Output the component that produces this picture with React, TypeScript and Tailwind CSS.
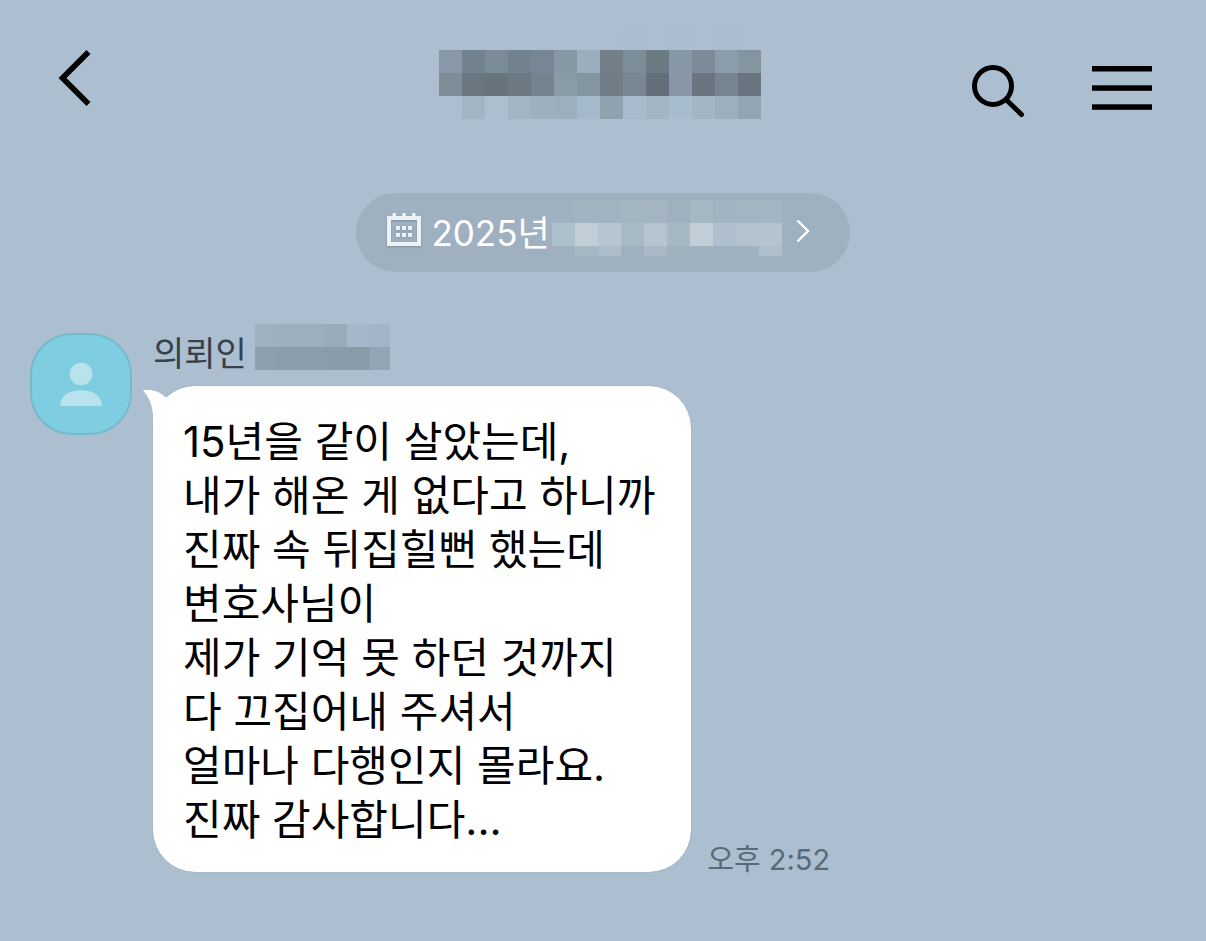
import React from 'react';

const MESSAGE_LINES = [
  '15년을 같이 살았는데,',
  '내가 해온 게 없다고 하니까',
  '진짜 속 뒤집힐뻔 했는데',
  '변호사님이',
  '제가 기억 못 하던 것까지',
  '다 끄집어내 주셔서',
  '얼마나 다행인지 몰라요.',
  '진짜 감사합니다...',
];

const CELL = 23;

// '' leaves the cell transparent
const TITLE_CELLS = [
  ['', '', '', '', '', '', '', '', '#a9bdce', '', '#a9bdce', '', '#a9bdce', ''],
  ['#8898a8', '#74828d', '#7b8c99', '#73818c', '#778594', '#8698a3', '#9baebe', '#727f89', '#7c8c98', '#6c7a84', '#8797a7', '#7d8b98', '#8a9dac', '#84959f'],
  ['#7e8c98', '#6a7780', '#68747b', '#6c7983', '#75838e', '#889ba7', '#83959f', '#707d87', '#798795', '#626f78', '#8797a7', '#6a7580', '#758491', '#6a7480'],
  ['', '#a2b5c4', '', '#a3b5c4', '#9db0bf', '#9bafbd', '#a4b9cc', '#8fa2b0', '#a7bbcd', '#a3b6c5', '#a8bccf', '#a2b6c6', '#9dafbf', '#93a4b5'],
];

const DATE_CELLS = [
  ['#9fb0c0', '#a2b3c1', '#a2b3c1', '#a4b5c2', '#a4b4c1', '#9eb1be', '#a6b7c4', '#a1b2c2', '#a3b4c3', '#a4b5c3'],
  ['#afc0cd', '#c1ced7', '#b7c5d0', '#a9bac7', '#b6c4cf', '#a6b8c4', '#c1ced8', '#b0bfcd', '#b4c2ce', '#b5c3cf'],
  ['', '#a6b7c4', '#adbcc9', '', '#a9bac6', '#a1b2bf', '#a0b1be', '', '#a0b1c0', '#aebecb'],
];

const NAME_CELLS = [
  ['#9fb1c1', '#9cafbf', '#9cafbf', '#98abba', '#a5b8cb', '#a3b6c8'],
  ['#8e9fad', '#8b9caa', '#8c9dab', '#8a9baa', '#8a9baa', '#94a6b5'],
];

interface MosaicProps {
  rows: string[][];
  width: number;
  height: number;
}

function Mosaic({ rows, width, height }: MosaicProps) {
  return (
    <svg
      width={width}
      height={height}
      viewBox={`0 0 ${width} ${height}`}
      shapeRendering="crispEdges"
      className="shrink-0"
      aria-hidden="true"
    >
      {rows.map((row, y) =>
        row.map((fill, x) =>
          fill ? (
            <rect key={`${x}-${y}`} x={x * CELL} y={y * CELL} width={CELL} height={CELL} fill={fill} />
          ) : null
        )
      )}
    </svg>
  );
}

function Header() {
  return (
    <header className="grid grid-cols-[1fr_auto_1fr] pt-[27px] pl-12 pr-[54px]">
      <button type="button" aria-label="뒤로" className="justify-self-start">
        <svg width="56" height="92" viewBox="0 0 56 92" fill="none" stroke="#000" strokeWidth="5.6">
          <path d="M40.5 25 L14.5 51 L40.5 77" />
        </svg>
      </button>

      <h1>
        <Mosaic rows={TITLE_CELLS} width={322} height={92} />
      </h1>

      <div className="flex justify-end gap-16">
        <button type="button" aria-label="검색">
          <svg width="56" height="92" viewBox="0 0 56 92" fill="none" stroke="#000" strokeWidth="5">
            <circle cx="21" cy="59" r="18.5" />
            <path d="M34.5 73 L49.5 87.5" strokeLinecap="round" />
          </svg>
        </button>
        <button type="button" aria-label="메뉴">
          <svg width="60" height="92" viewBox="0 0 60 92" fill="#000">
            <rect y="39" width="60" height="5.5" />
            <rect y="58.3" width="60" height="5.5" />
            <rect y="77.3" width="60" height="5.5" />
          </svg>
        </button>
      </div>
    </header>
  );
}

function CalendarIcon() {
  return (
    <svg
      width="34"
      height="36"
      viewBox="0 0 34 36"
      fill="#edf2f7"
      className="mb-1.5 shrink-0 drop-shadow-[0_1px_1px_rgba(90,110,130,0.5)]"
      aria-hidden="true"
    >
      <path fillRule="evenodd" d="M0 4H34V34H0Z M4 8V30H30V8Z" />
      <path d="M5.5 1h3.5v4H5.5Z M15.3 1h3.5v4h-3.5Z M25 1h3.5v4H25Z" />
      <path d="M9 14h4v4H9Z M15 14h4v4h-4Z M21 14h4v4h-4Z M9 21h4v4H9Z M15 21h4v4h-4Z M21 21h4v4h-4Z" />
    </svg>
  );
}

function DatePill() {
  return (
    <button
      type="button"
      className="mx-auto mt-[74px] flex h-[79px] items-center rounded-full bg-[#9fb1c0] pl-[31px] pr-10 text-white"
    >
      <CalendarIcon />
      <span className="ml-2.5 mr-0.5 font-['Inter','Noto_Sans_CJK_KR',sans-serif] text-[35px] leading-10">
        2025년
      </span>
      <span className="mb-2.5">
        <Mosaic rows={DATE_CELLS} width={230} height={56} />
      </span>
      <svg
        width="14"
        height="24"
        viewBox="0 0 14 24"
        fill="none"
        stroke="#fff"
        strokeWidth="2.4"
        className="mb-1 ml-3.5 shrink-0"
        aria-hidden="true"
      >
        <path d="M1.5 1.5 L12 12 L1.5 22.5" />
      </svg>
    </button>
  );
}

function Avatar() {
  return (
    <div className="mt-[9px] size-[102px] shrink-0 rounded-[42px] border-2 border-[#74bacb] bg-[#7fcde1]">
      <svg viewBox="0 0 98 98" fill="#b9e3ec" aria-hidden="true">
        <circle cx="49" cy="39" r="11.3" />
        <path d="M28 71 C28 61 37 55.3 49 55.3 C61 55.3 70 61 70 71 Z" />
      </svg>
    </div>
  );
}

function MessageBubble() {
  return (
    <div className="relative rounded-[42px] bg-white pt-[29px] pr-9 pb-[25px] pl-[30px] shadow-[0_0_1px_rgba(80,105,130,0.6)]">
      {/* Tail */}
      <svg
        width="44"
        height="42"
        viewBox="0 0 44 42"
        fill="#fff"
        className="absolute -left-2.5 top-0"
        aria-hidden="true"
      >
        <path d="M0 4.5 C8 3 16 5 22 11 L44 14 V42 H10 V28 C9 18 6 11 0 4.5 Z" />
      </svg>
      <p className="relative whitespace-nowrap font-['Inter','Noto_Sans_CJK_KR',sans-serif] text-[42px] leading-[54px] text-black">
        {MESSAGE_LINES.map((line) => (
          <span key={line} className="block">
            {line}
          </span>
        ))}
      </p>
    </div>
  );
}

export default function App() {
  return (
    <div className="min-h-screen bg-[#abbfd0] pb-16">
      <Header />
      <main>
        <DatePill />
        <article className="mt-[52px] flex items-start gap-[21px] pl-[30px]">
          <Avatar />
          <div>
            <div className="flex items-end gap-2">
              <span className="font-['Noto_Sans_CJK_KR',sans-serif] text-[34px] leading-9 text-[#36414a]">
                의뢰인
              </span>
              <Mosaic rows={NAME_CELLS} width={135} height={46} />
            </div>
            <div className="mt-4 flex items-end gap-4">
              <MessageBubble />
              <time
                dateTime="14:52"
                className="whitespace-nowrap font-['Inter','Noto_Sans_CJK_KR',sans-serif] text-[29px] leading-6 text-[#596a77]"
              >
                오후 2:52
              </time>
            </div>
          </div>
        </article>
      </main>
    </div>
  );
}
